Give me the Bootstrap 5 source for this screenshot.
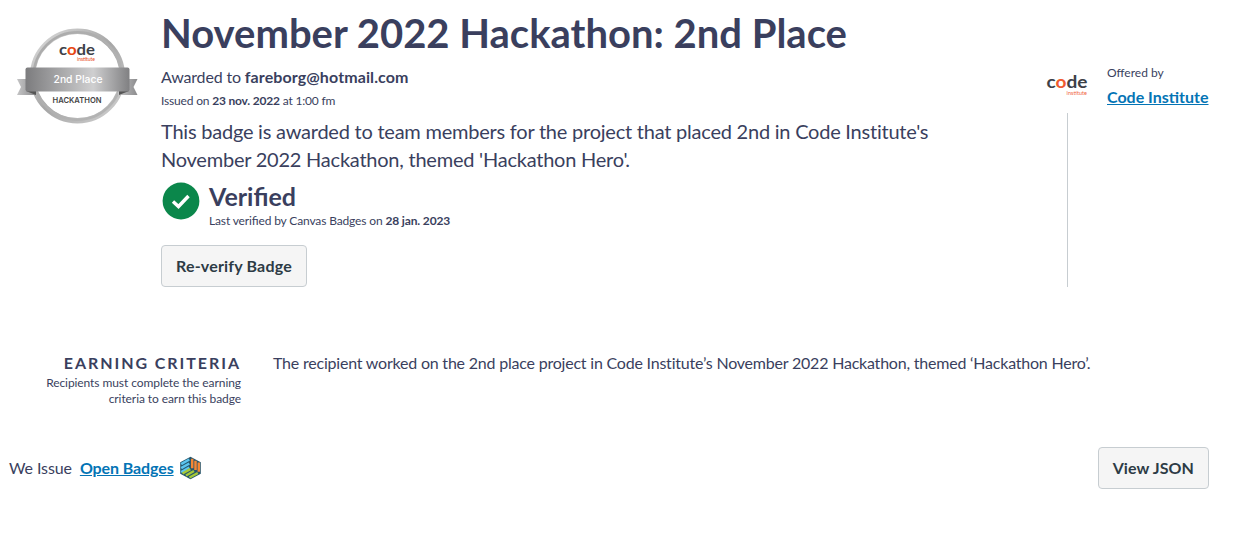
<!DOCTYPE html>
<html lang="en">
<head>
<meta charset="utf-8">
<meta name="viewport" content="width=device-width, initial-scale=1">
<title>November 2022 Hackathon: 2nd Place</title>
<link href="https://cdn.jsdelivr.net/npm/bootstrap@5.3.0/dist/css/bootstrap.min.css" rel="stylesheet">
<style>
body{font-family:Lato,"Liberation Sans",sans-serif;color:#3a3f5e;font-size:16px;line-height:24px;background:#fff;overflow:hidden}
a{color:#0374b5;font-weight:700}
.page{padding:9px 36px 0 9px}
.badge-art{width:152px;padding:17px 0 0 7px}
.badge-art svg,.issuer svg,.ok-icon,.cube{display:block}
.title{font-size:40px;line-height:48px;padding-bottom:2px;font-weight:700}
.awarded{padding-top:6px;letter-spacing:-.17px}
.awarded strong{letter-spacing:.1px}
.fine{font-size:12px;line-height:16px}
.issued{padding-top:4px;letter-spacing:-.18px}
.desc{font-size:20px;line-height:28px;width:800px;padding-top:8px;letter-spacing:-.23px}
.verify-row{padding-top:9px}
.verified{font-size:25px;line-height:28px;padding-bottom:3px;font-weight:700}
.checked-on{letter-spacing:-.14px;font-feature-settings:"liga"}
.reverify{margin-top:16px;letter-spacing:.18px}
.btn-plain{--bs-btn-bg:#f5f5f5;--bs-btn-border-color:#c7cdd1;--bs-btn-color:#2d3b45;height:42px;padding:0 14px;font-weight:700;border-radius:4px;line-height:40px}
.view-json{letter-spacing:.1px}
.issuer{width:163px;padding-top:56px}
.rule{width:1px;height:174px;background:#c7cdd1;margin:4px 0 0 21px}
.criteria{margin-top:64px}
.criteria-label{width:232px}
.criteria-label .fine{letter-spacing:-.08px}
.criteria-text{padding-left:32px;letter-spacing:-.21px}
.criteria h2{font-size:16px;line-height:24px;font-weight:700;letter-spacing:1.95px}
.footer-row{margin-top:40px}
.open-link{letter-spacing:-.1px}
</style>
</head>
<body>
<main class="page">
  <section class="d-flex">
    <div class="badge-art flex-shrink-0">
      <svg width="124" height="100" viewBox="0 0 124 100" role="img" aria-label="2nd Place Hackathon badge">
        <defs>
          <linearGradient id="ring" x2="1" y2="1"><stop stop-color="#ddd"/><stop offset=".5" stop-color="#a6a6a6"/><stop offset="1" stop-color="#d2d2d2"/></linearGradient>
          <linearGradient id="ring-edge" x2="1" y2="1"><stop stop-color="#aaa"/><stop offset="1" stop-color="#b5b5b5"/></linearGradient>
          <linearGradient id="band"><stop stop-color="#7c7c7e"/><stop offset=".65" stop-color="#cfcfd0"/><stop offset="1" stop-color="#808082"/></linearGradient>
          <linearGradient id="tail"><stop stop-color="#c5c5c6"/><stop offset="1" stop-color="#8b8b8d"/></linearGradient>
        </defs>
        <circle cx="61.500" cy="50" r="44.800" fill="#fff" stroke="url(#ring)" stroke-width="5.500"/>
        <circle cx="61.500" cy="50" r="43.800" fill="none" stroke="url(#ring-edge)" stroke-width="2.500"/>
        <path d="M1 53H20V69H1L5 61Z" fill="url(#tail)"/><path d="M121.500 53H102V69H121.500L117.500 61Z" fill="url(#tail)"/>
        <path d="M10 65H20V69ZM113 65H103V69Z" fill="#555"/>
        <rect x="9.500" y="41.500" width="104" height="24" rx="2" fill="url(#band)"/>
        <g font-family="Lato,sans-serif" font-weight="700">
          <text x="43" y="28.500" font-size="15.500" textLength="36" lengthAdjust="spacingAndGlyphs" fill="#3d4148">c<tspan fill="#e84610">o</tspan>de</text>
          <text x="61" y="35" font-size="5" font-weight="400" textLength="18" fill="#e84610">institute</text>
          <text x="37.500" y="56.500" font-size="10.500" font-family="Inter,Lato,sans-serif" font-weight="500" textLength="49" fill="#fff" lengthAdjust="spacingAndGlyphs">2nd Place</text>
          <text x="36.500" y="77" font-size="8" font-family="Inter,Lato,sans-serif" font-weight="600" textLength="49" fill="#444" lengthAdjust="spacingAndGlyphs">HACKATHON</text>
        </g>
      </svg>
    </div>
    <div class="flex-grow-1">
      <h1 class="title m-0">November 2022 Hackathon: 2nd Place</h1>
      <p class="m-0 awarded">Awarded to <strong>fareborg@hotmail.com</strong></p>
      <p class="fine m-0 issued">Issued on <strong>23 nov. 2022</strong> at 1:00 fm</p>
      <p class="desc m-0">This badge is awarded to team members for the project that placed 2nd in Code Institute's November 2022 Hackathon, themed 'Hackathon Hero'.</p>
      <div class="d-flex gap-2 verify-row">
        <svg class="ok-icon flex-shrink-0" width="40" height="40" viewBox="0 0 40 40"><circle cx="20" cy="19" r="18.400" fill="#0b874b"/><path d="M12 19.500L17.500 24.500L27.500 14" fill="none" stroke="#fff" stroke-width="3.400"/></svg>
        <div><h2 class="verified m-0">Verified</h2><p class="fine checked-on m-0">Last verified by Canvas Badges on <strong>28 jan. 2023</strong></p></div>
      </div>
      <button type="button" class="btn btn-plain reverify d-block">Re-verify Badge</button>
    </div>
    <aside class="issuer flex-shrink-0">
      <div class="d-flex align-items-start">
        <svg width="42" height="40" viewBox="0 0 42 40" class="flex-shrink-0" aria-label="Code Institute"><g font-family="Lato,sans-serif" font-weight="700"><text y="23" x=".5" font-size="17" textLength="41" lengthAdjust="spacingAndGlyphs" fill="#3d4148">c<tspan fill="#f05a30">o</tspan>de</text><text x="20.500" y="30" font-size="5.500" font-weight="400" textLength="20.500" fill="#f0623c">institute</text></g></svg>
        <div style="padding-left:19px"><div class="fine">Offered by</div><a href="#" class="d-block text-nowrap pt-1">Code Institute</a></div>
      </div>
      <div class="rule"></div>
    </aside>
  </section>
  <section class="criteria d-flex">
    <div class="criteria-label text-end"><h2 class="m-0">EARNING CRITERIA</h2><p class="fine m-0">Recipients must complete the earning<br>criteria to earn this badge</p></div>
    <p class="criteria-text m-0">The recipient worked on the 2nd place project in Code Institute’s November 2022 Hackathon, themed ‘Hackathon Hero’.</p>
  </section>
  <footer class="footer-row d-flex align-items-center">
    <span class="open-link">We Issue</span><a href="#" class="ms-2 open-link">Open Badges</a>
    <svg class="cube ms-1" width="24" height="24" viewBox="0 0 24 24"><path d="M12.500.7L22.800 6.300V17.700L12.500 23.300L2.200 17.700V6.300Z" fill="#25556b"/><g fill="none" stroke-width="2.500"><path d="M3.200 8.200L11.300 3.500M3.200 12.200L11.300 7.500M3.200 16.200L11.300 11.500" stroke="#5bc4ee"/><path d="M14.200 2.700V12.200M17.500 4.700V14M20.800 6.500V15.800" stroke="#f58634"/><path d="M4.500 17.500L12.300 13.200M8 19.500L16 15M11.500 21.500L19.800 17" stroke="#a5c838"/></g></svg>
    <button type="button" class="btn btn-plain view-json ms-auto">View JSON</button>
  </footer>
</main>
<script src="https://cdn.jsdelivr.net/npm/bootstrap@5.3.0/dist/js/bootstrap.bundle.min.js"></script>
</body>
</html>
